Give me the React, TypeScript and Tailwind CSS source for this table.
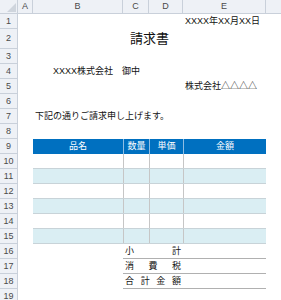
import React from "react";

const font = "font-['Liberation_Sans','Noto_Sans_CJK_JP',sans-serif]";

function RowHead({ n, h }: { n: number; h: string }) {
  return (
    <div className={`w-[18px] shrink-0 ${h} flex items-center justify-center bg-[#eef1f6] border-r border-b border-[#c9d0da] text-[9px] text-[#4a4a4a]`}>
      {n}
    </div>
  );
}

export default function App() {
  return (
    <div className={`w-[281px] h-[300px] overflow-hidden bg-white ${font} text-[#111] leading-none`}>
      {/* column headers */}
      <div className="flex h-[14px]">
        <div className="w-[18px] shrink-0 bg-[#eef1f6] border-r border-b border-[#c9d0da] relative">
          <svg className="absolute right-[1px] bottom-[1px]" width="9" height="9" viewBox="0 0 9 9">
            <path d="M9 0 L9 9 L0 9 Z" fill="#cfd5dd" />
          </svg>
        </div>
        <div className="w-[15px] shrink-0 flex items-center justify-center bg-[#eef1f6] border-r border-b border-[#c9d0da] text-[9px] text-[#4a4a4a]">A</div>
        <div className="w-[90px] shrink-0 flex items-center justify-center bg-[#eef1f6] border-r border-b border-[#c9d0da] text-[9px] text-[#4a4a4a]">B</div>
        <div className="w-[26px] shrink-0 flex items-center justify-center bg-[#eef1f6] border-r border-b border-[#c9d0da] text-[9px] text-[#4a4a4a]">C</div>
        <div className="w-[34px] shrink-0 flex items-center justify-center bg-[#eef1f6] border-r border-b border-[#c9d0da] text-[9px] text-[#4a4a4a]">D</div>
        <div className="w-[83px] shrink-0 flex items-center justify-center bg-[#eef1f6] border-r border-b border-[#c9d0da] text-[9px] text-[#4a4a4a]">E</div>
        <div className="flex-1 bg-[#eef1f6] border-b border-[#c9d0da]"></div>
      </div>

      {/* row 1 */}
      <div className="flex h-[15px]">
        <RowHead n={1} h="h-[15px]" />
        <div className="w-[165px] shrink-0"></div>
        <div className="w-[83px] shrink-0 flex items-center pl-[2px] text-[9px] whitespace-nowrap">XXXX年XX月XX日</div>
      </div>

      {/* row 2 */}
      <div className="flex h-[20px]">
        <RowHead n={2} h="h-[20px]" />
        <div className="w-[15px] shrink-0"></div>
        <div className="w-[233px] shrink-0 flex items-center justify-center text-[13px] pb-[2px]">請求書</div>
      </div>

      {/* row 3 */}
      <div className="flex h-[15px]">
        <RowHead n={3} h="h-[15px]" />
      </div>

      {/* row 4 */}
      <div className="flex h-[15px]">
        <RowHead n={4} h="h-[15px]" />
        <div className="w-[15px] shrink-0"></div>
        <div className="flex items-center pl-[20px] text-[9px] whitespace-nowrap">XXXX株式会社　御中</div>
      </div>

      {/* row 5 */}
      <div className="flex h-[15px]">
        <RowHead n={5} h="h-[15px]" />
        <div className="w-[165px] shrink-0"></div>
        <div className="w-[83px] shrink-0 flex items-center pl-[2px] text-[9px] whitespace-nowrap">株式会社△△△△</div>
      </div>

      {/* row 6 */}
      <div className="flex h-[15px]">
        <RowHead n={6} h="h-[15px]" />
      </div>

      {/* row 7 */}
      <div className="flex h-[15px]">
        <RowHead n={7} h="h-[15px]" />
        <div className="w-[15px] shrink-0"></div>
        <div className="flex items-center pl-[2px] text-[9px] whitespace-nowrap">下記の通りご請求申し上げます。</div>
      </div>

      {/* row 8 */}
      <div className="flex h-[15px]">
        <RowHead n={8} h="h-[15px]" />
      </div>

      {/* row 9 table header */}
      <div className="flex h-[15px]">
        <RowHead n={9} h="h-[15px]" />
        <div className="w-[15px] shrink-0"></div>
        <div className="flex bg-[#0070c0] text-white text-[9px]">
          <div className="w-[90px] flex items-center justify-center">品名</div>
          <div className="w-[26px] flex items-center justify-center border-l border-[#8fbde3]">数量</div>
          <div className="w-[34px] flex items-center justify-center border-l border-[#8fbde3]">単価</div>
          <div className="w-[83px] flex items-center justify-center border-l border-[#8fbde3]">金額</div>
        </div>
      </div>

      {/* rows 10-15 */}
      {[10, 11, 12, 13, 14, 15].map((n) => (
        <div key={n} className="flex h-[15px]">
          <RowHead n={n} h="h-[15px]" />
          <div className="w-[15px] shrink-0"></div>
          <div className={`flex border-b border-[#c8d3d8] ${n % 2 === 1 ? "bg-[#daeef3]" : "bg-white"}`}>
            <div className="w-[90px]"></div>
            <div className="w-[26px] border-l border-[#c6c6c6]"></div>
            <div className="w-[34px] border-l border-[#c6c6c6]"></div>
            <div className="w-[83px] border-l border-[#c6c6c6]"></div>
          </div>
        </div>
      ))}

      {/* row 16 */}
      <div className="flex h-[15px]">
        <RowHead n={16} h="h-[15px]" />
        <div className="w-[105px] shrink-0"></div>
        <div className="w-[143px] shrink-0 flex border-b border-[#b0b0b0] text-[9px]">
          <div className="w-[60px] flex items-center justify-between px-[2px]">
            <span>小</span>
            <span>計</span>
          </div>
        </div>
      </div>

      {/* row 17 */}
      <div className="flex h-[15px]">
        <RowHead n={17} h="h-[15px]" />
        <div className="w-[105px] shrink-0"></div>
        <div className="w-[143px] shrink-0 flex border-b border-[#b0b0b0] text-[9px]">
          <div className="w-[60px] flex items-center justify-between px-[2px]">
            <span>消</span>
            <span>費</span>
            <span>税</span>
          </div>
        </div>
      </div>

      {/* row 18 */}
      <div className="flex h-[15px]">
        <RowHead n={18} h="h-[15px]" />
        <div className="w-[105px] shrink-0"></div>
        <div className="w-[143px] shrink-0 flex border-b border-[#b0b0b0] text-[9px]">
          <div className="w-[60px] flex items-center justify-between px-[2px]">
            <span>合</span>
            <span>計</span>
            <span>金</span>
            <span>額</span>
          </div>
        </div>
      </div>

      {/* row 19 */}
      <div className="flex h-[15px]">
        <RowHead n={19} h="h-[15px]" />
      </div>
    </div>
  );
}
